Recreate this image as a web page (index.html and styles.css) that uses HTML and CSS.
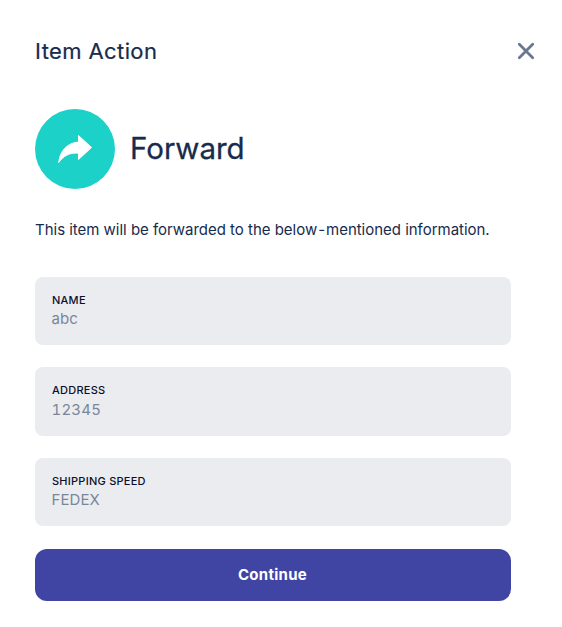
FILE: index.html
```
<!DOCTYPE html>
<html lang="en">
<head>
  <meta charset="UTF-8">
  <title>Item Action</title>
  <link rel="stylesheet" href="styles.css">
</head>
<body>

  <div class="modal">
    <header class="modal-header">
      <h2>Item Action</h2>
      <button class="close" aria-label="Close">
        <svg width="18" height="18" viewBox="0 0 18 18">
          <path d="M2.3 2.3 15.7 15.7M15.7 2.3 2.3 15.7" fill="none" stroke="currentColor" stroke-width="2.8" stroke-linecap="round"/>
        </svg>
      </button>
    </header>

    <div class="action">
      <div class="action-icon">
        <svg width="36" height="30" viewBox="0 0 36 30">
          <path d="M21.500 1.500 34.500 13.500 21.500 25.500V19.200C12.500 18.200 6.500 22 1.700 28.500C3 17.500 9.500 9 21.500 8Z" fill="#fff" stroke="#fff" stroke-width="1" stroke-linejoin="round"/>
        </svg>
      </div>
      <h1>Forward</h1>
    </div>

    <p class="note">This item will be forwarded to the below<span class="hyphen">-</span>mentioned information.</p>

    <div class="fields">
      <div class="field">
        <span class="label">NAME</span>
        <span class="value">abc</span>
      </div>
      <div class="field">
        <span class="label">ADDRESS</span>
        <span class="value number">12345</span>
      </div>
      <div class="field">
        <span class="label">SHIPPING SPEED</span>
        <span class="value">FEDEX</span>
      </div>
    </div>

    <button class="continue">Continue</button>
  </div>

</body>
</html>
```
FILE: styles.css
```
body {
  font-family: Inter, sans-serif;
  background: #fff;
  margin: 0;
  color: #172b4d;
}

.modal {
  padding: 36px 51px 0 35px;
}

.modal-header {
  display: flex;
  justify-content: space-between;
  align-items: center;
  height: 30px;
  margin-right: -24px;
}

h1,
h2 {
  margin: 0;
  font-weight: 400;
}

h2 {
  font-size: 22px;
  letter-spacing: 0.4px;
}

h1 {
  padding-bottom: 2px;
  font-size: 29.5px;
  -webkit-text-stroke: 0.3px;
}

h2 {
  -webkit-text-stroke: 0.2px;
}

.close {
  display: flex;
  padding: 0;
  border: none;
  background: none;
  color: #6b778f;
  cursor: pointer;
}

.action {
  display: flex;
  align-items: center;
  gap: 15px;
  margin-top: 43px;
}

.action-icon {
  display: flex;
  align-items: center;
  justify-content: center;
  width: 80px;
  height: 80px;
  border-radius: 50%;
  background: #1bd1c8;
}

.note {
  margin: 31px 0 0;
  font-size: 15px;
  line-height: 20px;
  letter-spacing: -0.02px;
  white-space: nowrap;
}

.hyphen {
  padding: 0 1px;
}

.fields {
  display: grid;
  gap: 22.1px;
  margin-top: 37px;
}

.field {
  display: flex;
  flex-direction: column;
  box-sizing: border-box;
  height: 68.3px;
  padding: 15px 17px 0;
  border-radius: 8px;
  background: #ebecf0;
}

.label {
  font-size: 11px;
  line-height: 16px;
  font-weight: 500;
  letter-spacing: 0.25px;
  color: #0b0f2b;
}

.value {
  margin-left: -0.5px;
  font-size: 15px;
  line-height: 22px;
  letter-spacing: 0.1px;
  color: #7a869a;
}

.number {
  line-height: 24px;
  letter-spacing: 0.2px;
  font-variant-numeric: tabular-nums;
}

.continue {
  display: block;
  width: 100%;
  height: 52px;
  margin-top: 23px;
  padding: 0 7px 2px 6px;
  border: none;
  border-radius: 12px;
  background: #4044a3;
  color: #fff;
  font: 650 15px Inter, sans-serif;
  letter-spacing: 0.3px;
  cursor: pointer;
}
```
